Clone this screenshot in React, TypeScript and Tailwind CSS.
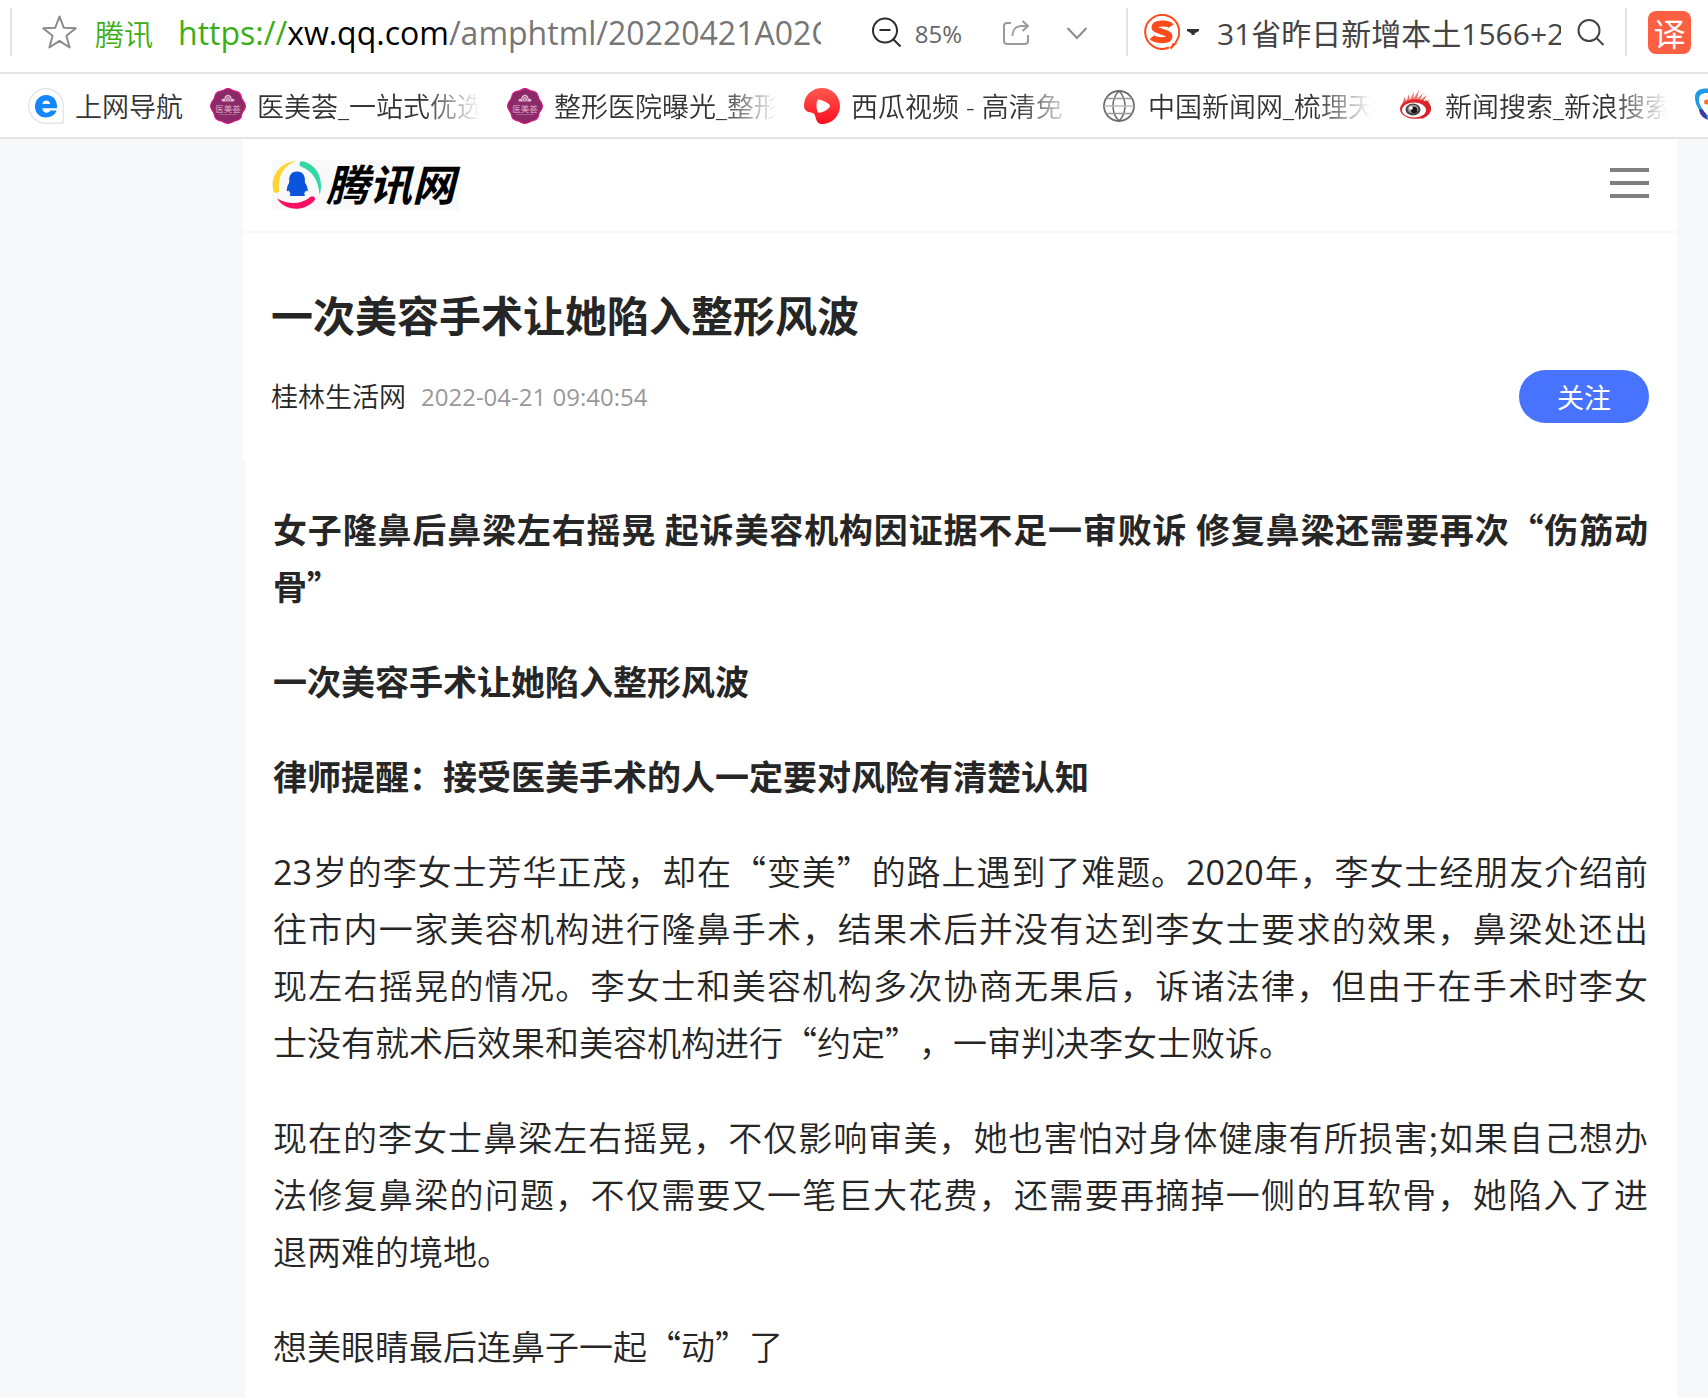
import type { ReactNode } from "react";

const QqLogo = () => (
  <svg viewBox="0 0 50 50" className="size-[50px] shrink-0" aria-hidden="true">
    <path d="M24 1.2C11 1.5.6 12 .8 25c0 2.500.3 4.800.9 6.600.8 2.300 5.600 1.800 5.500-1C6 17.500 10 6 24 1.200Z" fill="#ffd42b" />
    <path d="M30.500 1.300c-3.500-.4-4 4.200-1.200 5.500C40 11 46.500 20 47.600 35 51.500 23 48 5.500 30.500 1.300Z" fill="#32d9a4" />
    <path d="M5 38.500C12 50.500 31 53 42.500 40.500c2-2.500-1.600-5.500-4.200-3.500C29 44.500 17 45 5 38.500Z" fill="#ff0f62" />
    <path d="M25 11.500c-5 0-7.800 3.500-7.800 8.200v3C15.500 25 14.800 28 14.800 30c0 1.500.8 1.800 2 .6.400 1.200 1 2.200 1.800 3-1.200.6-1.400 2.400 0 2.400H32c1.400 0 1.200-1.800 0-2.400.8-.8 1.400-1.800 1.800-3 1.200 1.200 2 .9 2-.6 0-2-1.200-5-2.900-7.300v-3c0-4.700-2.900-8.200-7.900-8.200Z" fill="#0b55dc" />
  </svg>
);

const NavIcon = () => (
  <svg viewBox="0 0 36 36" className="size-9 shrink-0" aria-hidden="true">
    <path d="M18 .7a17.300 17.300 0 1 0 0 34.600h15.500c1.300 0 1.800-.6 1.800-1.800V18A17.300 17.300 0 0 0 18 .7Z" fill="#fff" stroke="#e3e5e8" strokeWidth="1.400" />
    <path d="M29 20.200H14.200c.5 5.300 6.600 5.800 8.200 2.400h6.200C26.800 27.600 22.500 29.500 18 29.500 11.300 29.500 7 24.800 7 18.500S11.500 7 18 7c7.200 0 11.500 5.200 11 13.200ZM14.400 16h7.700c-.3-4.600-7.200-4.600-7.700 0Z" fill="#1387fb" fillRule="evenodd" />
  </svg>
);

const BeautyIcon = () => (
  <svg viewBox="0 0 36 36" className="size-9 shrink-0" aria-hidden="true">
    <path d="M18 .6c3 0 3.500 1.800 6 2.300s4.500.4 6 2.600.8 3.700 2.300 6 3.100 3.300 3.100 6.500-1.700 4.200-3 6.500-.5 4.300-2.400 6.200-3.700 1.500-6 2.600-3.400 2.100-6 2.100-3.700-1.100-6-2.100-4.200-.7-6-2.600-1.200-3.900-2.400-6.200-3-3.300-3-6.500 1.700-4.200 3.100-6.500.8-3.800 2.300-6 3.500-2.100 6-2.600 3-2.300 6-2.300Z" fill="#8b2a68" stroke="#d6187f" strokeWidth="1.200" />
    <path d="M12 13.500c-1.200-2 .5-3.500 2.300-2.500.2-3 2-4.300 3.700-4.300s3.500 1.300 3.700 4.300c1.800-1 3.500.5 2.300 2.500Z" fill="#e6bcd6" />
    <path d="M16 13.500c-1-2.500.5-4.500 2-5.500 1.500 1 3 3 2 5.500M18 13.500v-4" fill="none" stroke="#8b2a68" strokeWidth=".7" />
    <text x="18" y="23.500" textAnchor="middle" fontSize="8.500" fill="#e3b3d0" fontFamily="Noto Sans CJK SC">医美荟</text>
    <path d="M9 26.500h18" stroke="#b56b9a" strokeWidth=".8" />
  </svg>
);

const XiguaIcon = () => (
  <svg viewBox="0 0 36 36" className="size-9 shrink-0" aria-hidden="true">
    <defs>
      <linearGradient id="xigua" x1="0" y1="0" x2="0" y2="1">
        <stop offset="0" stopColor="#ff5a50" />
        <stop offset="1" stopColor="#fb0d1e" />
      </linearGradient>
    </defs>
    <path d="M18 0C8 0 0 7.500 0 17.500c0 5 3.500 6.500 7 7 2.500.5 3.800 1.500 4.500 4.500C12.500 33.500 14 36 18 36c10 0 18-8 18-18S28 0 18 0Z" fill="url(#xigua)" />
    <path d="M14 11.800c1.500-1.400 11.500 3.400 12 6s-8.500 7.700-11.300 6.900c-2.500-1-3-11-.7-12.900Z" fill="#fff" />
  </svg>
);

const GlobeIcon = () => (
  <svg viewBox="0 0 36 36" className="size-9 shrink-0" fill="none" stroke="#6c6c6c" strokeWidth="1.500" aria-hidden="true">
    <circle cx="18" cy="18" r="15" strokeWidth="1.800" />
    <path d="M18 3c-8 8-8 22 0 30M18 3c8 8 8 22 0 30" />
    <path d="M5 10.500h26M5 25.500h26" stroke="#999" />
    <path d="M3 18h30" stroke="#bbb" />
  </svg>
);

const SinaIcon = () => (
  <svg viewBox="0 0 36 36" className="size-9 shrink-0" aria-hidden="true">
    <path d="M5 14 6.500 9 8.500 13l2.500-7 .8 6L16 4l-.5 7L21 2l-2 9 6-6-3 7 7-5-4 7 7-2-6 6L4 17Z" fill="#f2706c" />
    <ellipse cx="17.500" cy="21" rx="15.500" ry="9.800" fill="#e0272b" />
    <path d="M27 12c8 3 9 15-4 19 3-5 6-12 4-19Z" fill="#d92228" />
    <ellipse cx="16" cy="22" rx="12" ry="7.500" fill="#fff" />
    <ellipse cx="15" cy="21.500" rx="7.500" ry="6" fill="#444" />
    <ellipse cx="15" cy="21" rx="5.500" ry="4.200" fill="#9a9a9a" />
    <circle cx="16" cy="22" r="3.200" fill="#151515" />
    <circle cx="13" cy="20" r="1.800" fill="#fff" />
  </svg>
);

const BlueFaceIcon = () => (
  <svg viewBox="0 0 36 36" className="size-9 shrink-0" aria-hidden="true">
    <path d="M10 .5C4 .5 0 4 0 9c0 4 1 8 3 11s3 7 8 11c6 4 16 4 20-3s6-16 2-21S20 .5 10 .5Z" fill="#1f9be6" />
    <path d="M12 5C7 5 4 7 4 11c0 5 2 8 4 11s5 7 11 7 11-6 12-12S22 5 12 5Z" fill="#fff" />
    <path d="M4 22c1 5 4 8 8 9.500L11 26 7 21Z" fill="#40389e" />
    <circle cx="11.500" cy="14" r="2.500" fill="#f0763c" />
  </svg>
);

const SogouIcon = () => (
  <svg viewBox="0 0 36 36" className="size-9 shrink-0" fill="none" stroke="#fb4a1c" aria-hidden="true">
    <path d="M31.500 28.500A17 17 0 1 0 25 33.500" strokeWidth="2" />
    <path d="M30.500 30 26.500 34.500M32.500 29 28 31" strokeWidth="2.200" />
    <path d="M27 12.200C25 9 11 8 10.500 13c-.4 4.600 15.300 4.600 15 9.500-.3 5-14.500 4.500-17.500.7" strokeWidth="6" />
  </svg>
);

const Divider = () => <span className="h-12 w-0.5 shrink-0 bg-[#e3e3e3]" />;

const bookmarks: { label: string; icon: ReactNode; long: boolean }[] = [
  { label: "上网导航", icon: <NavIcon />, long: false },
  { label: "医美荟_一站式优选", icon: <BeautyIcon />, long: true },
  { label: "整形医院曝光_整形", icon: <BeautyIcon />, long: true },
  { label: "西瓜视频 - 高清免", icon: <XiguaIcon />, long: true },
  { label: "中国新闻网_梳理天", icon: <GlobeIcon />, long: true },
  { label: "新闻搜索_新浪搜索", icon: <SinaIcon />, long: true },
  { label: "", icon: <BlueFaceIcon />, long: false },
];

const Num = ({ children }: { children: ReactNode }) => (
  <span className="font-['Open_Sans','Noto_Sans_CJK_SC',sans-serif] leading-none font-normal">{children}</span>
);

/* Every line but the last is stretched to the full measure. */
const Paragraph = ({ lines, bold = false }: { lines: ReactNode[]; bold?: boolean }) => (
  <p className={bold ? "font-bold" : ""}>
    {lines.map((line, i) => (
      <span
        key={i}
        className={i < lines.length - 1 ? "block whitespace-nowrap [text-align-last:justify]" : "block"}
      >
        {line}
      </span>
    ))}
  </p>
);

export default function App() {
  return (
    <div
      lang="zh-CN"
      className="min-h-screen overflow-hidden bg-[#f6f8fa] font-['Noto_Sans_CJK_SC',sans-serif] text-[#262626] [text-spacing-trim:space-all]"
    >
      <div className="flex h-[74px] items-center border-b-2 border-[#e3e3e3] bg-white pb-2 pl-2.5">
        <Divider />
        <button aria-label="收藏" className="ml-[29px] shrink-0">
          <svg viewBox="0 0 36 36" className="size-9" fill="none" stroke="#8c8c8c" strokeWidth="2" strokeLinejoin="round" aria-hidden="true">
            <path d="m18.500 2.500 4.300 11.300 12 .5-9.400 7.500 3.200 11.700-10.100-6.700-10.100 6.700 3.200-11.700L2.200 14.300l12-.5Z" />
          </svg>
        </button>
        <span className="ml-[18px] shrink-0 pt-0.5 text-[29px] leading-10 font-[350] text-[#3aae17]">腾讯</span>
        <div
          role="textbox"
          aria-label="地址"
          tabIndex={0}
          className="ml-[25px] min-w-0 flex-1 overflow-hidden pt-0.5 font-['Open_Sans',sans-serif] text-[32px] leading-12 whitespace-nowrap text-[#767676]"
        >
          <span className="text-[#3aae17]">https://</span>
          <span className="text-black">xw.qq.com</span>/amphtml/20220421A02G
        </div>
        <button className="ml-[50px] flex shrink-0 items-center gap-3 font-['Open_Sans',sans-serif] text-[24px] text-[#666]">
          <svg viewBox="0 0 32 32" className="size-8" fill="none" stroke="#2c2c2c" strokeWidth="2" aria-hidden="true">
            <circle cx="14" cy="14.500" r="12" />
            <path d="m22.500 23.500 7 7M8.500 14h11" />
          </svg>
          <span className="pt-1">85%</span>
        </button>
        <button aria-label="分享" className="ml-10 shrink-0">
          <svg viewBox="0 0 28 28" className="size-7" fill="none" stroke="#9b9b9b" strokeWidth="2" aria-hidden="true">
            <path d="M9 5H5a3 3 0 0 0-3 3v15a3 3 0 0 0 3 3h18a3 3 0 0 0 3-3v-6" />
            <path d="M10.500 18c0-6 3.500-10 9-10h6M20.500 3l5.500 5-5.500 5" />
          </svg>
        </button>
        <button aria-label="展开" className="ml-9 shrink-0">
          <svg viewBox="0 0 22 22" className="size-[22px]" fill="none" stroke="#8c8c8c" strokeWidth="2" aria-hidden="true">
            <path d="m1.500 7 9.500 10 9.500-10" />
          </svg>
        </button>
        <div className="ml-[38px] flex shrink-0 items-center">
          <Divider />
          <button aria-label="搜索引擎" className="ml-4 flex items-center gap-[7px]">
            <SogouIcon />
            <svg viewBox="0 0 12 8" className="h-2 w-3" fill="#333" aria-hidden="true">
              <path d="M0 1h12v2L7.500 5.500V7h-3V5.500L0 3Z" />
            </svg>
          </button>
          <input
            aria-label="搜索"
            defaultValue="31省昨日新增本土1566+2"
            className="ml-[18px] h-12 w-[344px] font-['Open_Sans','Noto_Sans_CJK_SC',sans-serif] text-[30px] text-[#444] outline-none"
          />
          <button aria-label="开始搜索" className="ml-4">
            <svg viewBox="0 0 28 28" className="size-7" fill="none" stroke="#444" strokeWidth="2" aria-hidden="true">
              <circle cx="12" cy="12.500" r="10.500" />
              <path d="m19.500 20 7 7" />
            </svg>
          </button>
          <span className="w-5" />
          <Divider />
          <button className="mx-[17px] ml-[21px] size-[43px] rounded-lg bg-[#fd5f42] text-center text-[32px] leading-[43px] text-white">译</button>
        </div>
      </div>

      <nav className="flex h-[65px] items-center gap-[27px] overflow-hidden border-b-2 border-[#e3e3e3] bg-white pl-7">
        {bookmarks.map((b, i) => (
          <a key={i} href="#" aria-label={b.label || "书签"} className="flex shrink-0 items-center gap-[11px] font-['Open_Sans','Noto_Sans_CJK_SC',sans-serif] text-[27px] leading-10 font-[350] text-[#333]">
            {b.icon}
            {b.label && (
              <span
                className={
                  b.long
                    ? "w-[223px] overflow-hidden pt-0.5 whitespace-nowrap [mask-image:linear-gradient(to_right,black_calc(100%-56px),transparent)]"
                    : "pt-0.5 whitespace-nowrap"
                }
              >
                {b.label}
              </span>
            )}
          </a>
        ))}
      </nav>

      <div className="mr-[31px] ml-[243px]">
        <header className="flex h-[94px] items-center justify-between border-b-2 border-[#f7f7f8] bg-white pr-7 pl-[29px]">
          <a href="#" className="flex h-[50px] items-center gap-1 bg-[#f9f9f9] pr-1 text-[43px] leading-[50px] font-bold text-black italic">
            <QqLogo />
            <span className="pb-1.5">腾讯网</span>
          </a>
          <button aria-label="菜单" className="mb-1 flex w-[39px] flex-col gap-[9px]">
            <span className="h-1 w-full bg-[#808080]" />
            <span className="h-1 w-full bg-[#808080]" />
            <span className="h-1 w-full bg-[#808080]" />
          </button>
        </header>

        <div className="bg-white pt-[53px] pr-7 pb-[38px] pl-7">
          <h1 className="text-[42px] leading-[56px] font-bold">一次美容手术让她陷入整形风波</h1>
          <div className="mt-7 flex h-[53px] items-center">
            <span className="text-[27px] font-[350]">桂林生活网</span>
            <time className="ml-[15px] font-['Open_Sans',sans-serif] text-[24px] text-[#999]">2022-04-21 09:40:54</time>
            <button className="ml-auto h-[53px] rounded-full bg-[#4873ff] px-[38px] text-[27px] leading-[53px] text-white">关注</button>
          </div>
        </div>

        <article className="ml-0.5 flex flex-col gap-[38px] bg-white pt-[39px] pr-[29px] pb-10 pl-7 text-[34px] leading-[57px] font-[350]">
          <Paragraph
            bold
            lines={["女子隆鼻后鼻梁左右摇晃 起诉美容机构因证据不足一审败诉 修复鼻梁还需要再次“伤筋动", "骨”"]}
          />
          <Paragraph bold lines={["一次美容手术让她陷入整形风波"]} />
          <Paragraph bold lines={["律师提醒：接受医美手术的人一定要对风险有清楚认知"]} />
          <Paragraph
            lines={[
              <><Num>23</Num>岁的李女士芳华正茂，却在“变美”的路上遇到了难题。<Num>2020</Num>年，李女士经朋友介绍前</>,
              "往市内一家美容机构进行隆鼻手术，结果术后并没有达到李女士要求的效果，鼻梁处还出",
              "现左右摇晃的情况。李女士和美容机构多次协商无果后，诉诸法律，但由于在手术时李女",
              "士没有就术后效果和美容机构进行“约定”，一审判决李女士败诉。",
            ]}
          />
          <Paragraph
            lines={[
              "现在的李女士鼻梁左右摇晃，不仅影响审美，她也害怕对身体健康有所损害;如果自己想办",
              "法修复鼻梁的问题，不仅需要又一笔巨大花费，还需要再摘掉一侧的耳软骨，她陷入了进",
              "退两难的境地。",
            ]}
          />
          <Paragraph lines={["想美眼睛最后连鼻子一起“动”了"]} />
        </article>
      </div>
    </div>
  );
}
